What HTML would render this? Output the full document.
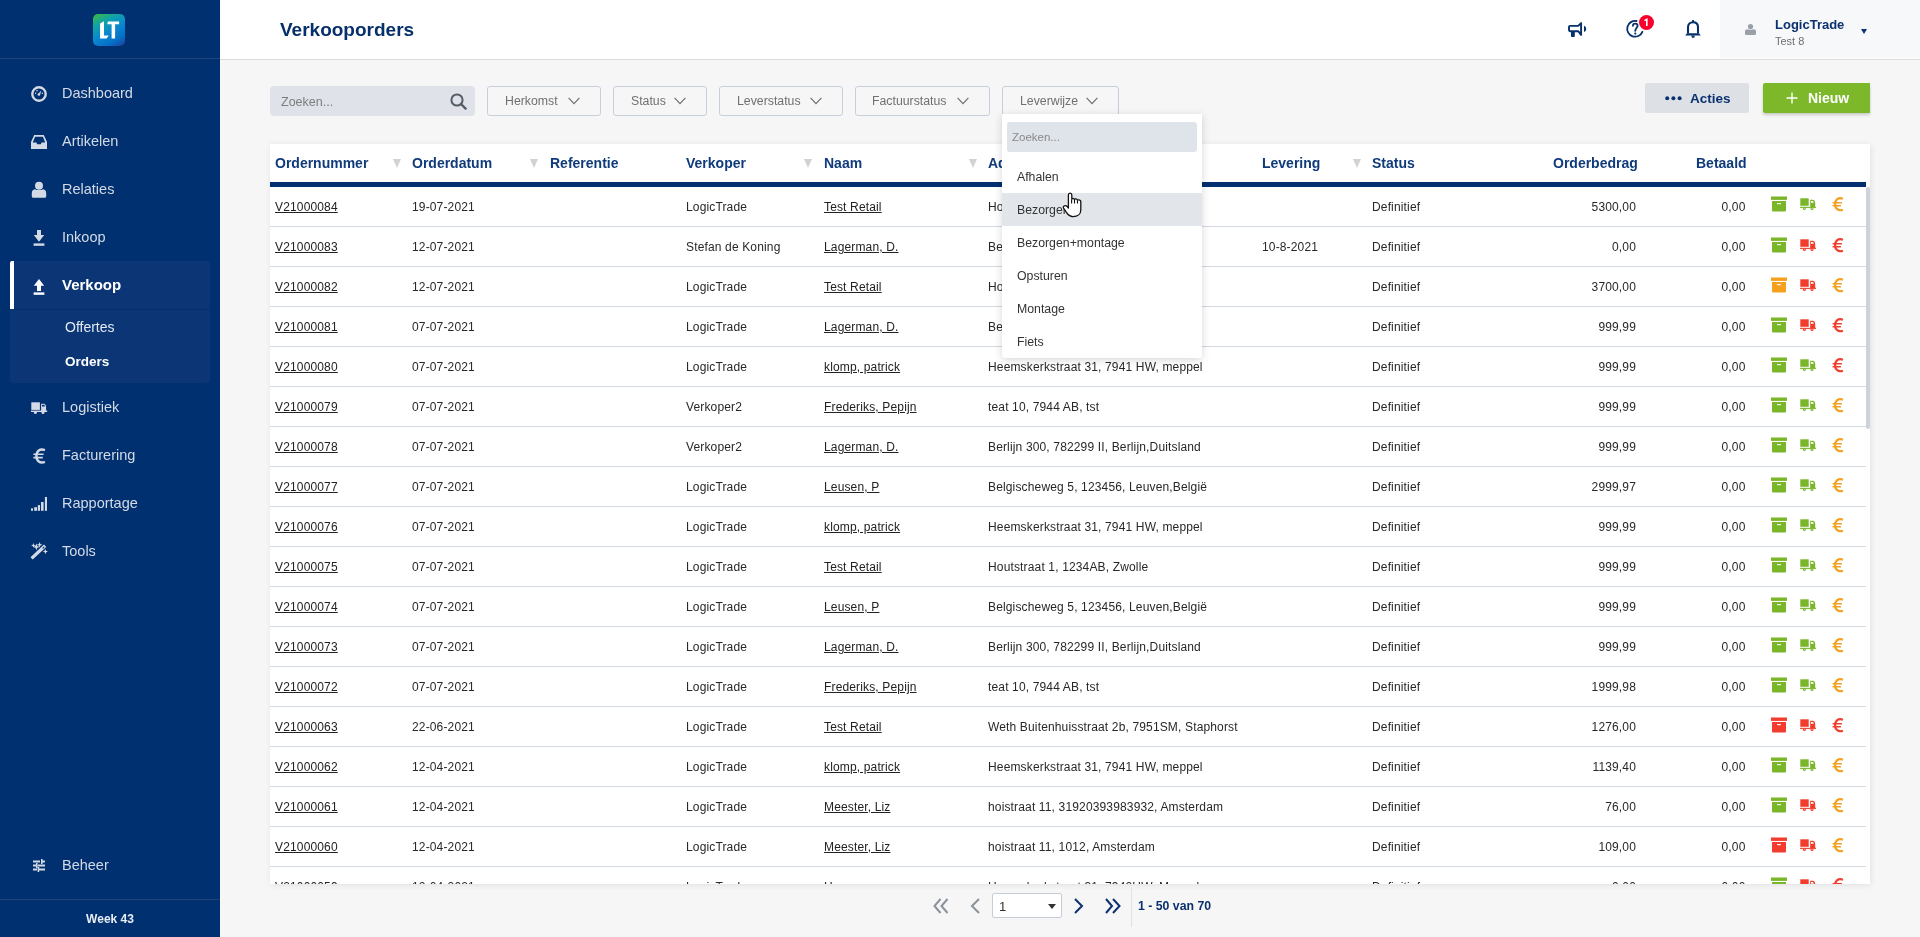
<!DOCTYPE html>
<html><head><meta charset="utf-8"><title>Verkooporders</title>
<style>
*{box-sizing:border-box;margin:0;padding:0}
html,body{width:1920px;height:937px;overflow:hidden;background:#f6f6f6;font-family:"Liberation Sans",sans-serif;-webkit-font-smoothing:antialiased;}
.abs{position:absolute}
#side{position:absolute;left:0;top:0;width:220px;height:937px;background:#00306f;}
#side .logo{position:absolute;left:93px;top:14px;width:32px;height:32px;border-radius:5px;background:linear-gradient(150deg,#40bb3a 0%,#10a3a8 28%,#0a86d0 55%,#0670c8 78%,#1b3d98 100%);}
#side .logo span{position:absolute;left:0;top:0;width:32px;line-height:32px;text-align:center;color:#fff;font-weight:700;font-size:20px;letter-spacing:-2px;}
#side .hdiv{position:absolute;left:0;top:58px;width:220px;height:1px;background:#1f447c}
.mi{position:absolute;left:62px;font-size:14.5px;color:#d3dae6;white-space:nowrap;line-height:1}
.mi.act{color:#fff;font-weight:700}
.sico{position:absolute;}
#actblk{position:absolute;left:10px;top:261px;width:200px;height:122px;background:#0b3574;border-radius:3px}
#actbar{position:absolute;left:10px;top:261px;width:4px;height:48px;background:#fff;border-radius:2px 0 0 0}
#actdiv{position:absolute;left:14px;top:309px;width:196px;height:1px;background:#062f6a}
.sub{position:absolute;left:65px;font-size:14px;color:#e4e9f1;line-height:1;white-space:nowrap}
.sub.b{font-weight:700;color:#fff;font-size:13.5px}
#week{position:absolute;left:0;top:899px;width:220px;height:38px;border-top:1px solid #1f447c}
#week span{position:absolute;left:0;width:220px;text-align:center;top:12px;font-size:12px;font-weight:700;color:#e8edf4}

#hdr{position:absolute;left:220px;top:0;width:1700px;height:60px;background:#fff;border-bottom:1px solid #dcdcdc}
#title{position:absolute;left:280px;top:20px;font-size:19px;font-weight:700;color:#06306b;line-height:1}
#user{position:absolute;left:1720px;top:0;width:200px;height:58px;background:#f7f8fa}
#uname{position:absolute;left:1775px;top:18px;font-size:13px;font-weight:700;color:#0b3170;line-height:1}
#usub{position:absolute;left:1775px;top:36px;font-size:11px;color:#707070;line-height:1}

#search{position:absolute;left:270px;top:86px;width:205px;height:30px;background:#dfe3e9;border-radius:4px}
#search span{position:absolute;left:11px;top:10px;font-size:12.5px;color:#7d7d7d;line-height:1}
.flt{position:absolute;top:86px;height:30px;border:1px solid #c6cedb;border-radius:3px;background:transparent}
.flt span{position:absolute;top:8px;font-size:12.3px;color:#707070;line-height:1;white-space:nowrap}
.flt svg{position:absolute;top:9.5px}
#acties{position:absolute;left:1645px;top:83px;width:104px;height:30px;background:#dde1e6;border-radius:2px}
#acties span{position:absolute;left:45px;top:8.5px;font-size:13.5px;font-weight:700;color:#0b3170;line-height:1}
#nieuw{position:absolute;left:1763px;top:83px;width:107px;height:30px;background:#7cb82a;border-radius:2px 0 0 2px;box-shadow:0 2px 3px rgba(0,0,0,.18)}
#nieuw span{position:absolute;left:45px;top:8px;font-size:14px;font-weight:700;color:#fff;line-height:1}

#tbl{position:absolute;left:270px;top:144px;width:1600px;height:740px;background:#fff;box-shadow:1px 1px 6px rgba(0,0,0,.09);overflow:hidden}
.th{position:absolute;top:12px;font-size:14px;font-weight:700;color:#0f3b7b;line-height:1;white-space:nowrap}
.th.r{text-align:right}
.srt{position:absolute;top:15px;width:0;height:0;border-left:4.4px solid transparent;border-right:4.4px solid transparent;border-top:9px solid #d2d2d2}
#bar{position:absolute;left:0;top:38px;width:1596px;height:5px;background:#00306f}
#body{position:absolute;left:0;top:43px;width:1596px;height:697px;overflow:hidden}
.tr{position:absolute;left:0;width:1596px;height:40px;border-bottom:1px solid #d3d9e2}
.td{position:absolute;top:14px;font-size:12px;color:#282828;line-height:1;white-space:nowrap;letter-spacing:0.15px}
.td.lnk{color:#222;text-decoration:underline;text-underline-offset:1px}
.ic{position:absolute;top:9px;height:18px}
.ib{position:absolute;top:0}
.it{position:absolute;top:2px}
.ie{position:absolute;top:0.5px}
#sbar{position:absolute;left:1596px;top:43px;width:4px;height:242px;background:#cdd3dc;border-radius:2px}

#dd{position:absolute;left:1002px;top:114px;width:200px;height:244px;background:#fff;border-radius:0 0 3px 3px;box-shadow:0 2px 8px rgba(0,0,0,.16)}
#ddsearch{position:absolute;left:5px;top:8px;width:190px;height:30px;background:#dfe3ea;border-radius:3px}
#ddsearch span{position:absolute;left:5px;top:10px;font-size:11.5px;color:#8a8a8a;line-height:1}
.ddi{position:absolute;left:0;width:200px;height:33px}
.ddi span{position:absolute;left:15px;top:11px;font-size:12.3px;color:#333;line-height:1}
.ddi.hov{background:#e2e6eb}

#pag .g{position:absolute}
#pgsel{position:absolute;left:992px;top:893px;width:70px;height:25px;background:#fff;border:1px solid #c5cdd8;border-radius:2px}
#pgsel span{position:absolute;left:6px;top:6px;font-size:13px;color:#333;line-height:1}
#pgtxt{position:absolute;left:1138px;top:900px;font-size:12.3px;font-weight:700;color:#0b3170;line-height:1}
#pgdiv{position:absolute;left:1131px;top:887px;width:1px;height:40px;background:#dde2e8}
#root{position:absolute;left:0;top:0;width:1920px;height:937px;will-change:transform}
</style></head><body><div id="root">

<div id="side">
  <div class="logo"><svg width="32" height="32" viewBox="0 0 32 32" style="position:absolute;left:0;top:0"><path d="M7.1 9.4L11 7.2V21.4H15.7L13.6 24.6H7.1Z" fill="#fff"/><path d="M15 7.5H26.1V10.3H22.1V24.6H18.6V10.3H14.2Z" fill="#fff"/></svg></div>
  <div class="hdiv"></div>
  <!-- Dashboard -->
  <svg class="sico" style="left:31px;top:86px" width="16" height="16" viewBox="0 0 16 16"><circle cx="8" cy="8" r="6.7" fill="none" stroke="#d3dae6" stroke-width="2.4"/><path d="M6.6 8.6L10.2 4.4L9 9.4Z" fill="#d3dae6"/><circle cx="7.8" cy="8.6" r="1.2" fill="#d3dae6"/><circle cx="4.6" cy="7.2" r="0.75" fill="#d3dae6"/><circle cx="6" cy="4.8" r="0.75" fill="#d3dae6"/><circle cx="11.4" cy="7.2" r="0.75" fill="#d3dae6"/></svg>
  <div class="mi" style="top:86px">Dashboard</div>
  <!-- Artikelen -->
  <svg class="sico" style="left:31px;top:135px" width="16" height="14" viewBox="0 0 16 14"><path d="M3.2 0h9.6L16 7v7H0V7z M4.1 1.8L1.8 7.4h3.6l0.8 1.8h3.6l0.8-1.8h3.6L11.9 1.8z" fill="#d3dae6" fill-rule="evenodd"/></svg>
  <div class="mi" style="top:134px">Artikelen</div>
  <!-- Relaties -->
  <svg class="sico" style="left:31px;top:181px" width="16" height="17" viewBox="0 0 16 17"><circle cx="8" cy="4.8" r="4" fill="#d3dae6"/><path d="M0.8 12.2C0.8 9.6 2.4 8.2 4.4 8.2C5.4 9.4 10.6 9.4 11.6 8.2C13.6 8.2 15.2 9.6 15.2 12.2V15.2C15.2 16 14.6 16.8 13.8 16.8H2.2C1.4 16.8 0.8 16 0.8 15.2z" fill="#d3dae6"/></svg>
  <div class="mi" style="top:182px">Relaties</div>
  <!-- Inkoop -->
  <svg class="sico" style="left:33px;top:230px" width="12" height="16" viewBox="0 0 12 16"><path d="M4 0h4v5h3.2L6 11.8L0.8 5H4z" fill="#d3dae6"/><rect x="0.6" y="13.4" width="10.8" height="2.4" fill="#d3dae6"/></svg>
  <div class="mi" style="top:230px">Inkoop</div>

  <div id="actblk"></div><div id="actbar"></div><div id="actdiv"></div>
  <!-- Verkoop -->
  <svg class="sico" style="left:33px;top:279px" width="12" height="16" viewBox="0 0 12 16"><path d="M6 0L11.2 6.8H8V12H4V6.8H0.8z" fill="#fff"/><rect x="0.6" y="13.4" width="10.8" height="2.4" fill="#fff"/></svg>
  <div class="mi act" style="top:277px;font-size:15px">Verkoop</div>
  <div class="sub" style="top:320px">Offertes</div>
  <div class="sub b" style="top:355px">Orders</div>

  <!-- Logistiek -->
  <svg class="sico" style="left:31px;top:402px" width="17" height="12" viewBox="0 0 17 12"><rect x="0.3" y="0.3" width="8.6" height="7.6" fill="#d3dae6"/><path d="M10.1 1.8h2.9c1.2 0 2 1.3 2.1 3.3V9H10.1z" fill="#d3dae6"/><path d="M11.1 2.8h1.8c.5 0 .9.6 1 1.6h-2.8z" fill="#00306f"/><rect x="0" y="8.6" width="16.2" height="1.4" fill="#d3dae6"/><circle cx="4.4" cy="10.4" r="1.5" fill="#d3dae6"/><circle cx="12" cy="10.4" r="1.5" fill="#d3dae6"/></svg>
  <div class="mi" style="top:400px">Logistiek</div>
  <!-- Facturering -->
  <svg class="sico" style="left:33px;top:448px" width="13" height="16" viewBox="0 0 13 16"><path d="M11.9 2.1C6.9 0 3.4 3.2 3.4 8C3.4 12.8 6.9 16 11.9 13.9" fill="none" stroke="#d3dae6" stroke-width="2.4"/><path d="M0.4 6.3H10.6M0.4 9.6H9.8" stroke="#d3dae6" stroke-width="1.6"/></svg>
  <div class="mi" style="top:448px">Facturering</div>
  <!-- Rapportage -->
  <svg class="sico" style="left:31px;top:497px" width="16" height="14" viewBox="0 0 16 14"><rect x="0" y="11.3" width="2" height="2.5" fill="#d3dae6"/><rect x="3.2" y="10.2" width="2.8" height="3.6" fill="#d3dae6"/><rect x="6.8" y="8.1" width="2.2" height="5.7" fill="#d3dae6"/><rect x="10" y="5" width="2.6" height="8.8" fill="#d3dae6"/><rect x="13.9" y="0" width="2.1" height="13.8" fill="#d3dae6"/></svg>
  <div class="mi" style="top:496px">Rapportage</div>
  <!-- Tools -->
  <svg class="sico" style="left:30px;top:542px" width="19" height="18" viewBox="0 0 19 18"><path d="M1.6 16.4L15.1 3.7" stroke="#d3dae6" stroke-width="3.3"/><path d="M12.6 6.4L14.3 4.8" stroke="#00306f" stroke-width="1.1"/><path d="M6.4 1.50L7.35 3.95L9.80 4.9L7.35 5.85L6.4 8.30L5.45 5.85L3.00 4.9L5.45 3.95ZM3.4 1.10L4.04 2.76L5.70 3.4L4.04 4.04L3.4 5.70L2.76 4.04L1.10 3.4L2.76 2.76ZM9.6 0.00L10.36 1.94L12.30 2.7L10.36 3.46L9.6 5.40L8.84 3.46L6.90 2.7L8.84 1.94ZM15.4 7.00L16.13 8.87L18.00 9.6L16.13 10.33L15.4 12.20L14.67 10.33L12.80 9.6L14.67 8.87Z" fill="#d3dae6"/></svg>
  <div class="mi" style="top:543.5px">Tools</div>
  <!-- Beheer -->
  <svg class="sico" style="left:33px;top:859px" width="12" height="13" viewBox="0 0 12 13"><rect x="0" y="1.5" width="7" height="2" fill="#d3dae6"/><rect x="8.6" y="1.5" width="3.4" height="2" fill="#d3dae6"/><rect x="8" y="0" width="1.6" height="5" fill="#d3dae6"/><rect x="0" y="5.5" width="3.4" height="2" fill="#d3dae6"/><rect x="5" y="5.5" width="7" height="2" fill="#d3dae6"/><rect x="3" y="4" width="1.6" height="5" fill="#d3dae6"/><rect x="0" y="9.5" width="4" height="2" fill="#d3dae6"/><rect x="5.6" y="9.5" width="6.4" height="2" fill="#d3dae6"/><rect x="4.6" y="8" width="1.6" height="5" fill="#d3dae6"/></svg>
  <div class="mi" style="top:858px">Beheer</div>
  <div id="week"><span>Week 43</span></div>
</div>

<div id="hdr"></div>
<div id="title">Verkooporders</div>
<!-- megaphone -->
<svg class="abs" style="left:1564px;top:18px" width="26" height="22" viewBox="0 0 26 22"><path d="M6.1 7.9H14.2L17.1 5.1V16.9L14.2 13.2H6.1C5.5 13.2 5 12.7 5 12.1V9C5 8.4 5.5 7.9 6.1 7.9Z" fill="none" stroke="#06306b" stroke-width="1.9" stroke-linejoin="round"/><path d="M7 13.4H10.8V18.2C10.8 18.7 10.4 19 9.9 19H7.9C7.4 19 7 18.7 7 18.2Z" fill="#06306b"/><path d="M20 7.8C21.4 8.4 22.2 9.6 22.2 10.95C22.2 12.3 21.4 13.5 20 14.1Z" fill="#06306b"/></svg>
<!-- help -->
<svg class="abs" style="left:1622px;top:12px" width="36" height="30" viewBox="0 0 36 30"><path d="M20.4 19.8A7.9 7.9 0 1 1 14.5 9" fill="none" stroke="#06306b" stroke-width="1.8" stroke-linecap="round"/><path d="M10.9 13.8C10.9 12.3 12 11.6 13.3 11.6C14.6 11.6 15.6 12.4 15.6 13.7C15.6 15.4 13.6 16 13.2 18.8" fill="none" stroke="#06306b" stroke-width="1.8" stroke-linecap="round"/><circle cx="13.3" cy="21.6" r="1.1" fill="#06306b"/></svg>
<div class="abs" style="left:1639px;top:15px;width:15px;height:15px;border-radius:50%;background:#f7002e"></div>
<svg class="abs" style="left:1639px;top:15px" width="15" height="15" viewBox="0 0 15 15"><path d="M5.5 5.6L7.8 4.3V11.1" fill="none" stroke="#fff" stroke-width="1.6"/></svg>
<!-- bell -->
<svg class="abs" style="left:1680px;top:16px" width="26" height="26" viewBox="0 0 26 26"><path d="M8 17.6V11.2C8 8 10.2 6.3 13 6.3C15.8 6.3 18 8 18 11.2V17.6" fill="none" stroke="#06306b" stroke-width="2.1"/><path d="M5.2 19.4L7 17.3H19L20.8 19.4Z" fill="#06306b"/><rect x="12" y="4.1" width="2" height="2.4" fill="#06306b"/><path d="M11.4 19.6H14.8L14.5 21.3C14.2 22 11.9 22 11.7 21.3Z" fill="#06306b"/></svg>
<div id="user"></div>
<svg class="abs" style="left:1745px;top:24px" width="11" height="11" viewBox="0 0 11 11"><circle cx="5.5" cy="2.6" r="2.6" fill="#9aa0a8"/><path d="M0 7.6C0 6 1 5.2 2.4 5.2c.8.6 5.4.6 6.2 0C10 5.2 11 6 11 7.6V9.8c0 .6-.5 1.2-1.1 1.2H1.1C.5 11 0 10.4 0 9.8z" fill="#9aa0a8"/></svg>
<div id="uname">LogicTrade</div>
<div id="usub">Test 8</div>
<div class="abs" style="left:1861px;top:29px;width:0;height:0;border-left:3.5px solid transparent;border-right:3.5px solid transparent;border-top:5px solid #0b3170"></div>

<div id="search"><span>Zoeken...</span>
<svg class="abs" style="left:180px;top:7px" width="17" height="17" viewBox="0 0 17 17"><circle cx="7" cy="7" r="5.6" fill="none" stroke="#555c66" stroke-width="2"/><path d="M11 11l4.6 4.6" stroke="#555c66" stroke-width="2.4" stroke-linecap="round"/></svg></div>

<div class="flt" style="left:487px;width:114px"><span style="left:17px">Herkomst</span><svg style="left:80px" width="12" height="8" viewBox="0 0 12 8"><path d="M0.6 0.8L6 6.6L11.4 0.8" fill="none" stroke="#6f6f6f" stroke-width="1.2"/></svg></div>
<div class="flt" style="left:613px;width:94px"><span style="left:17px">Status</span><svg style="left:60px" width="12" height="8" viewBox="0 0 12 8"><path d="M0.6 0.8L6 6.6L11.4 0.8" fill="none" stroke="#6f6f6f" stroke-width="1.2"/></svg></div>
<div class="flt" style="left:719px;width:124px"><span style="left:17px">Leverstatus</span><svg style="left:90px" width="12" height="8" viewBox="0 0 12 8"><path d="M0.6 0.8L6 6.6L11.4 0.8" fill="none" stroke="#6f6f6f" stroke-width="1.2"/></svg></div>
<div class="flt" style="left:855px;width:135px"><span style="left:16px">Factuurstatus</span><svg style="left:101px" width="12" height="8" viewBox="0 0 12 8"><path d="M0.6 0.8L6 6.6L11.4 0.8" fill="none" stroke="#6f6f6f" stroke-width="1.2"/></svg></div>
<div class="flt" style="left:1002px;width:117px"><span style="left:17px">Leverwijze</span><svg style="left:83px" width="12" height="8" viewBox="0 0 12 8"><path d="M0.6 0.8L6 6.6L11.4 0.8" fill="none" stroke="#6f6f6f" stroke-width="1.2"/></svg></div>

<div id="acties"><svg class="abs" style="left:20px;top:13px" width="17" height="5" viewBox="0 0 17 5"><circle cx="2.2" cy="2.2" r="2" fill="#0b3170"/><circle cx="8.4" cy="2.2" r="2" fill="#0b3170"/><circle cx="14.6" cy="2.2" r="2" fill="#0b3170"/></svg><span>Acties</span></div>
<div id="nieuw"><svg class="abs" style="left:23px;top:9px" width="12" height="12" viewBox="0 0 12 12"><path d="M6 0.5V11.5M0.5 6H11.5" stroke="#fff" stroke-width="1.4"/></svg><span>Nieuw</span></div>

<div id="tbl">
  <div class="th" style="left:5px">Ordernummer</div><span class="srt" style="left:123px"></span>
  <div class="th" style="left:142px">Orderdatum</div><span class="srt" style="left:260px"></span>
  <div class="th" style="left:280px">Referentie</div>
  <div class="th" style="left:416px">Verkoper</div><span class="srt" style="left:534px"></span>
  <div class="th" style="left:554px">Naam</div><span class="srt" style="left:699px"></span>
  <div class="th" style="left:718px">Adres</div>
  <div class="th" style="left:992px">Levering</div><span class="srt" style="left:1083px"></span>
  <div class="th" style="left:1102px">Status</div>
  <div class="th" style="left:1283px">Orderbedrag</div>
  <div class="th" style="left:1426px">Betaald</div>
  <div id="bar"></div>
  <div id="body">
<div class="tr" style="top:0px"><span class="td lnk" style="left:5px">V21000084</span><span class="td" style="left:142px">19-07-2021</span><span class="td" style="left:416px">LogicTrade</span><span class="td lnk" style="left:554px">Test Retail</span><span class="td" style="left:718px">Houtstraat 1, 1234AB, Zwolle</span><span class="td" style="left:992px"></span><span class="td" style="left:1102px">Definitief</span><span class="td r" style="right:230px">5300,00</span><span class="td r" style="right:120.5px">0,00</span><span class="ic" style="left:1501px;top:9px"><svg class="ib" width="16" height="16" viewBox="0 0 16 16"><rect x="0" y="0.5" width="16" height="3.4" fill="#7ab629"/><path d="M1 5h14v9.6a0.8 0.8 0 0 1-0.8 0.8H1.8A0.8 0.8 0 0 1 1 14.6z" fill="#7ab629"/><rect x="6" y="7" width="4" height="1.2" rx="0.6" fill="#fff"/></svg></span><span class="ic" style="left:1530px;top:9px"><svg class="it" width="16" height="13" viewBox="0 0 16 13"><rect x="0.3" y="0.3" width="8.4" height="7.5" fill="#7ab629"/><path d="M10.2 1.8h2.6c1.3 0 2.3 1.2 2.4 3.2V9H10.2z" fill="#7ab629"/><path d="M11 2.9h1.7c.6 0 1 .8 1.1 1.9h-2.8z" fill="#fff"/><rect x="0" y="8.8" width="16" height="1.1" fill="#7ab629"/><circle cx="4.4" cy="10.5" r="1.5" fill="#7ab629"/><circle cx="12" cy="10.5" r="1.5" fill="#7ab629"/><circle cx="4.4" cy="10.5" r=".5" fill="#fff"/><circle cx="12" cy="10.5" r=".5" fill="#fff"/></svg></span><span class="ic" style="left:1562px;top:9px"><svg class="ie" width="12" height="15" viewBox="0 0 12 15"><path d="M10.9 1.7C6.2 -0.1 3.1 3 3.1 7.2C3.1 11.4 6.2 14.5 10.9 12.7" fill="none" stroke="#f5a01e" stroke-width="2.2"/><path d="M0.6 5.7H9.9M0.6 8.7H8.9" stroke="#f5a01e" stroke-width="1.5"/></svg></span></div>
<div class="tr" style="top:40px"><span class="td lnk" style="left:5px">V21000083</span><span class="td" style="left:142px">12-07-2021</span><span class="td" style="left:416px">Stefan de Koning</span><span class="td lnk" style="left:554px">Lagerman, D.</span><span class="td" style="left:718px">Berlijn 300, 782299 II, Berlijn,Duitsland</span><span class="td" style="left:992px">10-8-2021</span><span class="td" style="left:1102px">Definitief</span><span class="td r" style="right:230px">0,00</span><span class="td r" style="right:120.5px">0,00</span><span class="ic" style="left:1501px;top:10px"><svg class="ib" width="16" height="16" viewBox="0 0 16 16"><rect x="0" y="0.5" width="16" height="3.4" fill="#7ab629"/><path d="M1 5h14v9.6a0.8 0.8 0 0 1-0.8 0.8H1.8A0.8 0.8 0 0 1 1 14.6z" fill="#7ab629"/><rect x="6" y="7" width="4" height="1.2" rx="0.6" fill="#fff"/></svg></span><span class="ic" style="left:1530px;top:10px"><svg class="it" width="16" height="13" viewBox="0 0 16 13"><rect x="0.3" y="0.3" width="8.4" height="7.5" fill="#f23c2d"/><path d="M10.2 1.8h2.6c1.3 0 2.3 1.2 2.4 3.2V9H10.2z" fill="#f23c2d"/><path d="M11 2.9h1.7c.6 0 1 .8 1.1 1.9h-2.8z" fill="#fff"/><rect x="0" y="8.8" width="16" height="1.1" fill="#f23c2d"/><circle cx="4.4" cy="10.5" r="1.5" fill="#f23c2d"/><circle cx="12" cy="10.5" r="1.5" fill="#f23c2d"/><circle cx="4.4" cy="10.5" r=".5" fill="#fff"/><circle cx="12" cy="10.5" r=".5" fill="#fff"/></svg></span><span class="ic" style="left:1562px;top:10px"><svg class="ie" width="12" height="15" viewBox="0 0 12 15"><path d="M10.9 1.7C6.2 -0.1 3.1 3 3.1 7.2C3.1 11.4 6.2 14.5 10.9 12.7" fill="none" stroke="#f23c2d" stroke-width="2.2"/><path d="M0.6 5.7H9.9M0.6 8.7H8.9" stroke="#f23c2d" stroke-width="1.5"/></svg></span></div>
<div class="tr" style="top:80px"><span class="td lnk" style="left:5px">V21000082</span><span class="td" style="left:142px">12-07-2021</span><span class="td" style="left:416px">LogicTrade</span><span class="td lnk" style="left:554px">Test Retail</span><span class="td" style="left:718px">Houtstraat 1, 1234AB, Zwolle</span><span class="td" style="left:992px"></span><span class="td" style="left:1102px">Definitief</span><span class="td r" style="right:230px">3700,00</span><span class="td r" style="right:120.5px">0,00</span><span class="ic" style="left:1501px;top:10px"><svg class="ib" width="16" height="16" viewBox="0 0 16 16"><rect x="0" y="0.5" width="16" height="3.4" fill="#f5a01e"/><path d="M1 5h14v9.6a0.8 0.8 0 0 1-0.8 0.8H1.8A0.8 0.8 0 0 1 1 14.6z" fill="#f5a01e"/><rect x="6" y="7" width="4" height="1.2" rx="0.6" fill="#fff"/></svg></span><span class="ic" style="left:1530px;top:10px"><svg class="it" width="16" height="13" viewBox="0 0 16 13"><rect x="0.3" y="0.3" width="8.4" height="7.5" fill="#f23c2d"/><path d="M10.2 1.8h2.6c1.3 0 2.3 1.2 2.4 3.2V9H10.2z" fill="#f23c2d"/><path d="M11 2.9h1.7c.6 0 1 .8 1.1 1.9h-2.8z" fill="#fff"/><rect x="0" y="8.8" width="16" height="1.1" fill="#f23c2d"/><circle cx="4.4" cy="10.5" r="1.5" fill="#f23c2d"/><circle cx="12" cy="10.5" r="1.5" fill="#f23c2d"/><circle cx="4.4" cy="10.5" r=".5" fill="#fff"/><circle cx="12" cy="10.5" r=".5" fill="#fff"/></svg></span><span class="ic" style="left:1562px;top:10px"><svg class="ie" width="12" height="15" viewBox="0 0 12 15"><path d="M10.9 1.7C6.2 -0.1 3.1 3 3.1 7.2C3.1 11.4 6.2 14.5 10.9 12.7" fill="none" stroke="#f5a01e" stroke-width="2.2"/><path d="M0.6 5.7H9.9M0.6 8.7H8.9" stroke="#f5a01e" stroke-width="1.5"/></svg></span></div>
<div class="tr" style="top:120px"><span class="td lnk" style="left:5px">V21000081</span><span class="td" style="left:142px">07-07-2021</span><span class="td" style="left:416px">LogicTrade</span><span class="td lnk" style="left:554px">Lagerman, D.</span><span class="td" style="left:718px">Berlijn 300, 782299 II, Berlijn,Duitsland</span><span class="td" style="left:992px"></span><span class="td" style="left:1102px">Definitief</span><span class="td r" style="right:230px">999,99</span><span class="td r" style="right:120.5px">0,00</span><span class="ic" style="left:1501px;top:10px"><svg class="ib" width="16" height="16" viewBox="0 0 16 16"><rect x="0" y="0.5" width="16" height="3.4" fill="#7ab629"/><path d="M1 5h14v9.6a0.8 0.8 0 0 1-0.8 0.8H1.8A0.8 0.8 0 0 1 1 14.6z" fill="#7ab629"/><rect x="6" y="7" width="4" height="1.2" rx="0.6" fill="#fff"/></svg></span><span class="ic" style="left:1530px;top:10px"><svg class="it" width="16" height="13" viewBox="0 0 16 13"><rect x="0.3" y="0.3" width="8.4" height="7.5" fill="#f23c2d"/><path d="M10.2 1.8h2.6c1.3 0 2.3 1.2 2.4 3.2V9H10.2z" fill="#f23c2d"/><path d="M11 2.9h1.7c.6 0 1 .8 1.1 1.9h-2.8z" fill="#fff"/><rect x="0" y="8.8" width="16" height="1.1" fill="#f23c2d"/><circle cx="4.4" cy="10.5" r="1.5" fill="#f23c2d"/><circle cx="12" cy="10.5" r="1.5" fill="#f23c2d"/><circle cx="4.4" cy="10.5" r=".5" fill="#fff"/><circle cx="12" cy="10.5" r=".5" fill="#fff"/></svg></span><span class="ic" style="left:1562px;top:10px"><svg class="ie" width="12" height="15" viewBox="0 0 12 15"><path d="M10.9 1.7C6.2 -0.1 3.1 3 3.1 7.2C3.1 11.4 6.2 14.5 10.9 12.7" fill="none" stroke="#f23c2d" stroke-width="2.2"/><path d="M0.6 5.7H9.9M0.6 8.7H8.9" stroke="#f23c2d" stroke-width="1.5"/></svg></span></div>
<div class="tr" style="top:160px"><span class="td lnk" style="left:5px">V21000080</span><span class="td" style="left:142px">07-07-2021</span><span class="td" style="left:416px">LogicTrade</span><span class="td lnk" style="left:554px">klomp, patrick</span><span class="td" style="left:718px">Heemskerkstraat 31, 7941 HW, meppel</span><span class="td" style="left:992px"></span><span class="td" style="left:1102px">Definitief</span><span class="td r" style="right:230px">999,99</span><span class="td r" style="right:120.5px">0,00</span><span class="ic" style="left:1501px;top:10px"><svg class="ib" width="16" height="16" viewBox="0 0 16 16"><rect x="0" y="0.5" width="16" height="3.4" fill="#7ab629"/><path d="M1 5h14v9.6a0.8 0.8 0 0 1-0.8 0.8H1.8A0.8 0.8 0 0 1 1 14.6z" fill="#7ab629"/><rect x="6" y="7" width="4" height="1.2" rx="0.6" fill="#fff"/></svg></span><span class="ic" style="left:1530px;top:10px"><svg class="it" width="16" height="13" viewBox="0 0 16 13"><rect x="0.3" y="0.3" width="8.4" height="7.5" fill="#7ab629"/><path d="M10.2 1.8h2.6c1.3 0 2.3 1.2 2.4 3.2V9H10.2z" fill="#7ab629"/><path d="M11 2.9h1.7c.6 0 1 .8 1.1 1.9h-2.8z" fill="#fff"/><rect x="0" y="8.8" width="16" height="1.1" fill="#7ab629"/><circle cx="4.4" cy="10.5" r="1.5" fill="#7ab629"/><circle cx="12" cy="10.5" r="1.5" fill="#7ab629"/><circle cx="4.4" cy="10.5" r=".5" fill="#fff"/><circle cx="12" cy="10.5" r=".5" fill="#fff"/></svg></span><span class="ic" style="left:1562px;top:10px"><svg class="ie" width="12" height="15" viewBox="0 0 12 15"><path d="M10.9 1.7C6.2 -0.1 3.1 3 3.1 7.2C3.1 11.4 6.2 14.5 10.9 12.7" fill="none" stroke="#f23c2d" stroke-width="2.2"/><path d="M0.6 5.7H9.9M0.6 8.7H8.9" stroke="#f23c2d" stroke-width="1.5"/></svg></span></div>
<div class="tr" style="top:200px"><span class="td lnk" style="left:5px">V21000079</span><span class="td" style="left:142px">07-07-2021</span><span class="td" style="left:416px">Verkoper2</span><span class="td lnk" style="left:554px">Frederiks, Pepijn</span><span class="td" style="left:718px">teat 10, 7944 AB, tst</span><span class="td" style="left:992px"></span><span class="td" style="left:1102px">Definitief</span><span class="td r" style="right:230px">999,99</span><span class="td r" style="right:120.5px">0,00</span><span class="ic" style="left:1501px;top:10px"><svg class="ib" width="16" height="16" viewBox="0 0 16 16"><rect x="0" y="0.5" width="16" height="3.4" fill="#7ab629"/><path d="M1 5h14v9.6a0.8 0.8 0 0 1-0.8 0.8H1.8A0.8 0.8 0 0 1 1 14.6z" fill="#7ab629"/><rect x="6" y="7" width="4" height="1.2" rx="0.6" fill="#fff"/></svg></span><span class="ic" style="left:1530px;top:10px"><svg class="it" width="16" height="13" viewBox="0 0 16 13"><rect x="0.3" y="0.3" width="8.4" height="7.5" fill="#7ab629"/><path d="M10.2 1.8h2.6c1.3 0 2.3 1.2 2.4 3.2V9H10.2z" fill="#7ab629"/><path d="M11 2.9h1.7c.6 0 1 .8 1.1 1.9h-2.8z" fill="#fff"/><rect x="0" y="8.8" width="16" height="1.1" fill="#7ab629"/><circle cx="4.4" cy="10.5" r="1.5" fill="#7ab629"/><circle cx="12" cy="10.5" r="1.5" fill="#7ab629"/><circle cx="4.4" cy="10.5" r=".5" fill="#fff"/><circle cx="12" cy="10.5" r=".5" fill="#fff"/></svg></span><span class="ic" style="left:1562px;top:10px"><svg class="ie" width="12" height="15" viewBox="0 0 12 15"><path d="M10.9 1.7C6.2 -0.1 3.1 3 3.1 7.2C3.1 11.4 6.2 14.5 10.9 12.7" fill="none" stroke="#f5a01e" stroke-width="2.2"/><path d="M0.6 5.7H9.9M0.6 8.7H8.9" stroke="#f5a01e" stroke-width="1.5"/></svg></span></div>
<div class="tr" style="top:240px"><span class="td lnk" style="left:5px">V21000078</span><span class="td" style="left:142px">07-07-2021</span><span class="td" style="left:416px">Verkoper2</span><span class="td lnk" style="left:554px">Lagerman, D.</span><span class="td" style="left:718px">Berlijn 300, 782299 II, Berlijn,Duitsland</span><span class="td" style="left:992px"></span><span class="td" style="left:1102px">Definitief</span><span class="td r" style="right:230px">999,99</span><span class="td r" style="right:120.5px">0,00</span><span class="ic" style="left:1501px;top:10px"><svg class="ib" width="16" height="16" viewBox="0 0 16 16"><rect x="0" y="0.5" width="16" height="3.4" fill="#7ab629"/><path d="M1 5h14v9.6a0.8 0.8 0 0 1-0.8 0.8H1.8A0.8 0.8 0 0 1 1 14.6z" fill="#7ab629"/><rect x="6" y="7" width="4" height="1.2" rx="0.6" fill="#fff"/></svg></span><span class="ic" style="left:1530px;top:10px"><svg class="it" width="16" height="13" viewBox="0 0 16 13"><rect x="0.3" y="0.3" width="8.4" height="7.5" fill="#7ab629"/><path d="M10.2 1.8h2.6c1.3 0 2.3 1.2 2.4 3.2V9H10.2z" fill="#7ab629"/><path d="M11 2.9h1.7c.6 0 1 .8 1.1 1.9h-2.8z" fill="#fff"/><rect x="0" y="8.8" width="16" height="1.1" fill="#7ab629"/><circle cx="4.4" cy="10.5" r="1.5" fill="#7ab629"/><circle cx="12" cy="10.5" r="1.5" fill="#7ab629"/><circle cx="4.4" cy="10.5" r=".5" fill="#fff"/><circle cx="12" cy="10.5" r=".5" fill="#fff"/></svg></span><span class="ic" style="left:1562px;top:10px"><svg class="ie" width="12" height="15" viewBox="0 0 12 15"><path d="M10.9 1.7C6.2 -0.1 3.1 3 3.1 7.2C3.1 11.4 6.2 14.5 10.9 12.7" fill="none" stroke="#f5a01e" stroke-width="2.2"/><path d="M0.6 5.7H9.9M0.6 8.7H8.9" stroke="#f5a01e" stroke-width="1.5"/></svg></span></div>
<div class="tr" style="top:280px"><span class="td lnk" style="left:5px">V21000077</span><span class="td" style="left:142px">07-07-2021</span><span class="td" style="left:416px">LogicTrade</span><span class="td lnk" style="left:554px">Leusen, P</span><span class="td" style="left:718px">Belgischeweg 5, 123456, Leuven,Belgi&euml;</span><span class="td" style="left:992px"></span><span class="td" style="left:1102px">Definitief</span><span class="td r" style="right:230px">2999,97</span><span class="td r" style="right:120.5px">0,00</span><span class="ic" style="left:1501px;top:10px"><svg class="ib" width="16" height="16" viewBox="0 0 16 16"><rect x="0" y="0.5" width="16" height="3.4" fill="#7ab629"/><path d="M1 5h14v9.6a0.8 0.8 0 0 1-0.8 0.8H1.8A0.8 0.8 0 0 1 1 14.6z" fill="#7ab629"/><rect x="6" y="7" width="4" height="1.2" rx="0.6" fill="#fff"/></svg></span><span class="ic" style="left:1530px;top:10px"><svg class="it" width="16" height="13" viewBox="0 0 16 13"><rect x="0.3" y="0.3" width="8.4" height="7.5" fill="#7ab629"/><path d="M10.2 1.8h2.6c1.3 0 2.3 1.2 2.4 3.2V9H10.2z" fill="#7ab629"/><path d="M11 2.9h1.7c.6 0 1 .8 1.1 1.9h-2.8z" fill="#fff"/><rect x="0" y="8.8" width="16" height="1.1" fill="#7ab629"/><circle cx="4.4" cy="10.5" r="1.5" fill="#7ab629"/><circle cx="12" cy="10.5" r="1.5" fill="#7ab629"/><circle cx="4.4" cy="10.5" r=".5" fill="#fff"/><circle cx="12" cy="10.5" r=".5" fill="#fff"/></svg></span><span class="ic" style="left:1562px;top:10px"><svg class="ie" width="12" height="15" viewBox="0 0 12 15"><path d="M10.9 1.7C6.2 -0.1 3.1 3 3.1 7.2C3.1 11.4 6.2 14.5 10.9 12.7" fill="none" stroke="#f5a01e" stroke-width="2.2"/><path d="M0.6 5.7H9.9M0.6 8.7H8.9" stroke="#f5a01e" stroke-width="1.5"/></svg></span></div>
<div class="tr" style="top:320px"><span class="td lnk" style="left:5px">V21000076</span><span class="td" style="left:142px">07-07-2021</span><span class="td" style="left:416px">LogicTrade</span><span class="td lnk" style="left:554px">klomp, patrick</span><span class="td" style="left:718px">Heemskerkstraat 31, 7941 HW, meppel</span><span class="td" style="left:992px"></span><span class="td" style="left:1102px">Definitief</span><span class="td r" style="right:230px">999,99</span><span class="td r" style="right:120.5px">0,00</span><span class="ic" style="left:1501px;top:10px"><svg class="ib" width="16" height="16" viewBox="0 0 16 16"><rect x="0" y="0.5" width="16" height="3.4" fill="#7ab629"/><path d="M1 5h14v9.6a0.8 0.8 0 0 1-0.8 0.8H1.8A0.8 0.8 0 0 1 1 14.6z" fill="#7ab629"/><rect x="6" y="7" width="4" height="1.2" rx="0.6" fill="#fff"/></svg></span><span class="ic" style="left:1530px;top:10px"><svg class="it" width="16" height="13" viewBox="0 0 16 13"><rect x="0.3" y="0.3" width="8.4" height="7.5" fill="#7ab629"/><path d="M10.2 1.8h2.6c1.3 0 2.3 1.2 2.4 3.2V9H10.2z" fill="#7ab629"/><path d="M11 2.9h1.7c.6 0 1 .8 1.1 1.9h-2.8z" fill="#fff"/><rect x="0" y="8.8" width="16" height="1.1" fill="#7ab629"/><circle cx="4.4" cy="10.5" r="1.5" fill="#7ab629"/><circle cx="12" cy="10.5" r="1.5" fill="#7ab629"/><circle cx="4.4" cy="10.5" r=".5" fill="#fff"/><circle cx="12" cy="10.5" r=".5" fill="#fff"/></svg></span><span class="ic" style="left:1562px;top:10px"><svg class="ie" width="12" height="15" viewBox="0 0 12 15"><path d="M10.9 1.7C6.2 -0.1 3.1 3 3.1 7.2C3.1 11.4 6.2 14.5 10.9 12.7" fill="none" stroke="#f5a01e" stroke-width="2.2"/><path d="M0.6 5.7H9.9M0.6 8.7H8.9" stroke="#f5a01e" stroke-width="1.5"/></svg></span></div>
<div class="tr" style="top:360px"><span class="td lnk" style="left:5px">V21000075</span><span class="td" style="left:142px">07-07-2021</span><span class="td" style="left:416px">LogicTrade</span><span class="td lnk" style="left:554px">Test Retail</span><span class="td" style="left:718px">Houtstraat 1, 1234AB, Zwolle</span><span class="td" style="left:992px"></span><span class="td" style="left:1102px">Definitief</span><span class="td r" style="right:230px">999,99</span><span class="td r" style="right:120.5px">0,00</span><span class="ic" style="left:1501px;top:10px"><svg class="ib" width="16" height="16" viewBox="0 0 16 16"><rect x="0" y="0.5" width="16" height="3.4" fill="#7ab629"/><path d="M1 5h14v9.6a0.8 0.8 0 0 1-0.8 0.8H1.8A0.8 0.8 0 0 1 1 14.6z" fill="#7ab629"/><rect x="6" y="7" width="4" height="1.2" rx="0.6" fill="#fff"/></svg></span><span class="ic" style="left:1530px;top:10px"><svg class="it" width="16" height="13" viewBox="0 0 16 13"><rect x="0.3" y="0.3" width="8.4" height="7.5" fill="#7ab629"/><path d="M10.2 1.8h2.6c1.3 0 2.3 1.2 2.4 3.2V9H10.2z" fill="#7ab629"/><path d="M11 2.9h1.7c.6 0 1 .8 1.1 1.9h-2.8z" fill="#fff"/><rect x="0" y="8.8" width="16" height="1.1" fill="#7ab629"/><circle cx="4.4" cy="10.5" r="1.5" fill="#7ab629"/><circle cx="12" cy="10.5" r="1.5" fill="#7ab629"/><circle cx="4.4" cy="10.5" r=".5" fill="#fff"/><circle cx="12" cy="10.5" r=".5" fill="#fff"/></svg></span><span class="ic" style="left:1562px;top:10px"><svg class="ie" width="12" height="15" viewBox="0 0 12 15"><path d="M10.9 1.7C6.2 -0.1 3.1 3 3.1 7.2C3.1 11.4 6.2 14.5 10.9 12.7" fill="none" stroke="#f5a01e" stroke-width="2.2"/><path d="M0.6 5.7H9.9M0.6 8.7H8.9" stroke="#f5a01e" stroke-width="1.5"/></svg></span></div>
<div class="tr" style="top:400px"><span class="td lnk" style="left:5px">V21000074</span><span class="td" style="left:142px">07-07-2021</span><span class="td" style="left:416px">LogicTrade</span><span class="td lnk" style="left:554px">Leusen, P</span><span class="td" style="left:718px">Belgischeweg 5, 123456, Leuven,Belgi&euml;</span><span class="td" style="left:992px"></span><span class="td" style="left:1102px">Definitief</span><span class="td r" style="right:230px">999,99</span><span class="td r" style="right:120.5px">0,00</span><span class="ic" style="left:1501px;top:10px"><svg class="ib" width="16" height="16" viewBox="0 0 16 16"><rect x="0" y="0.5" width="16" height="3.4" fill="#7ab629"/><path d="M1 5h14v9.6a0.8 0.8 0 0 1-0.8 0.8H1.8A0.8 0.8 0 0 1 1 14.6z" fill="#7ab629"/><rect x="6" y="7" width="4" height="1.2" rx="0.6" fill="#fff"/></svg></span><span class="ic" style="left:1530px;top:10px"><svg class="it" width="16" height="13" viewBox="0 0 16 13"><rect x="0.3" y="0.3" width="8.4" height="7.5" fill="#7ab629"/><path d="M10.2 1.8h2.6c1.3 0 2.3 1.2 2.4 3.2V9H10.2z" fill="#7ab629"/><path d="M11 2.9h1.7c.6 0 1 .8 1.1 1.9h-2.8z" fill="#fff"/><rect x="0" y="8.8" width="16" height="1.1" fill="#7ab629"/><circle cx="4.4" cy="10.5" r="1.5" fill="#7ab629"/><circle cx="12" cy="10.5" r="1.5" fill="#7ab629"/><circle cx="4.4" cy="10.5" r=".5" fill="#fff"/><circle cx="12" cy="10.5" r=".5" fill="#fff"/></svg></span><span class="ic" style="left:1562px;top:10px"><svg class="ie" width="12" height="15" viewBox="0 0 12 15"><path d="M10.9 1.7C6.2 -0.1 3.1 3 3.1 7.2C3.1 11.4 6.2 14.5 10.9 12.7" fill="none" stroke="#f5a01e" stroke-width="2.2"/><path d="M0.6 5.7H9.9M0.6 8.7H8.9" stroke="#f5a01e" stroke-width="1.5"/></svg></span></div>
<div class="tr" style="top:440px"><span class="td lnk" style="left:5px">V21000073</span><span class="td" style="left:142px">07-07-2021</span><span class="td" style="left:416px">LogicTrade</span><span class="td lnk" style="left:554px">Lagerman, D.</span><span class="td" style="left:718px">Berlijn 300, 782299 II, Berlijn,Duitsland</span><span class="td" style="left:992px"></span><span class="td" style="left:1102px">Definitief</span><span class="td r" style="right:230px">999,99</span><span class="td r" style="right:120.5px">0,00</span><span class="ic" style="left:1501px;top:10px"><svg class="ib" width="16" height="16" viewBox="0 0 16 16"><rect x="0" y="0.5" width="16" height="3.4" fill="#7ab629"/><path d="M1 5h14v9.6a0.8 0.8 0 0 1-0.8 0.8H1.8A0.8 0.8 0 0 1 1 14.6z" fill="#7ab629"/><rect x="6" y="7" width="4" height="1.2" rx="0.6" fill="#fff"/></svg></span><span class="ic" style="left:1530px;top:10px"><svg class="it" width="16" height="13" viewBox="0 0 16 13"><rect x="0.3" y="0.3" width="8.4" height="7.5" fill="#7ab629"/><path d="M10.2 1.8h2.6c1.3 0 2.3 1.2 2.4 3.2V9H10.2z" fill="#7ab629"/><path d="M11 2.9h1.7c.6 0 1 .8 1.1 1.9h-2.8z" fill="#fff"/><rect x="0" y="8.8" width="16" height="1.1" fill="#7ab629"/><circle cx="4.4" cy="10.5" r="1.5" fill="#7ab629"/><circle cx="12" cy="10.5" r="1.5" fill="#7ab629"/><circle cx="4.4" cy="10.5" r=".5" fill="#fff"/><circle cx="12" cy="10.5" r=".5" fill="#fff"/></svg></span><span class="ic" style="left:1562px;top:10px"><svg class="ie" width="12" height="15" viewBox="0 0 12 15"><path d="M10.9 1.7C6.2 -0.1 3.1 3 3.1 7.2C3.1 11.4 6.2 14.5 10.9 12.7" fill="none" stroke="#f5a01e" stroke-width="2.2"/><path d="M0.6 5.7H9.9M0.6 8.7H8.9" stroke="#f5a01e" stroke-width="1.5"/></svg></span></div>
<div class="tr" style="top:480px"><span class="td lnk" style="left:5px">V21000072</span><span class="td" style="left:142px">07-07-2021</span><span class="td" style="left:416px">LogicTrade</span><span class="td lnk" style="left:554px">Frederiks, Pepijn</span><span class="td" style="left:718px">teat 10, 7944 AB, tst</span><span class="td" style="left:992px"></span><span class="td" style="left:1102px">Definitief</span><span class="td r" style="right:230px">1999,98</span><span class="td r" style="right:120.5px">0,00</span><span class="ic" style="left:1501px;top:10px"><svg class="ib" width="16" height="16" viewBox="0 0 16 16"><rect x="0" y="0.5" width="16" height="3.4" fill="#7ab629"/><path d="M1 5h14v9.6a0.8 0.8 0 0 1-0.8 0.8H1.8A0.8 0.8 0 0 1 1 14.6z" fill="#7ab629"/><rect x="6" y="7" width="4" height="1.2" rx="0.6" fill="#fff"/></svg></span><span class="ic" style="left:1530px;top:10px"><svg class="it" width="16" height="13" viewBox="0 0 16 13"><rect x="0.3" y="0.3" width="8.4" height="7.5" fill="#7ab629"/><path d="M10.2 1.8h2.6c1.3 0 2.3 1.2 2.4 3.2V9H10.2z" fill="#7ab629"/><path d="M11 2.9h1.7c.6 0 1 .8 1.1 1.9h-2.8z" fill="#fff"/><rect x="0" y="8.8" width="16" height="1.1" fill="#7ab629"/><circle cx="4.4" cy="10.5" r="1.5" fill="#7ab629"/><circle cx="12" cy="10.5" r="1.5" fill="#7ab629"/><circle cx="4.4" cy="10.5" r=".5" fill="#fff"/><circle cx="12" cy="10.5" r=".5" fill="#fff"/></svg></span><span class="ic" style="left:1562px;top:10px"><svg class="ie" width="12" height="15" viewBox="0 0 12 15"><path d="M10.9 1.7C6.2 -0.1 3.1 3 3.1 7.2C3.1 11.4 6.2 14.5 10.9 12.7" fill="none" stroke="#f5a01e" stroke-width="2.2"/><path d="M0.6 5.7H9.9M0.6 8.7H8.9" stroke="#f5a01e" stroke-width="1.5"/></svg></span></div>
<div class="tr" style="top:520px"><span class="td lnk" style="left:5px">V21000063</span><span class="td" style="left:142px">22-06-2021</span><span class="td" style="left:416px">LogicTrade</span><span class="td lnk" style="left:554px">Test Retail</span><span class="td" style="left:718px">Weth Buitenhuisstraat 2b, 7951SM, Staphorst</span><span class="td" style="left:992px"></span><span class="td" style="left:1102px">Definitief</span><span class="td r" style="right:230px">1276,00</span><span class="td r" style="right:120.5px">0,00</span><span class="ic" style="left:1501px;top:10px"><svg class="ib" width="16" height="16" viewBox="0 0 16 16"><rect x="0" y="0.5" width="16" height="3.4" fill="#f23c2d"/><path d="M1 5h14v9.6a0.8 0.8 0 0 1-0.8 0.8H1.8A0.8 0.8 0 0 1 1 14.6z" fill="#f23c2d"/><rect x="6" y="7" width="4" height="1.2" rx="0.6" fill="#fff"/></svg></span><span class="ic" style="left:1530px;top:10px"><svg class="it" width="16" height="13" viewBox="0 0 16 13"><rect x="0.3" y="0.3" width="8.4" height="7.5" fill="#f23c2d"/><path d="M10.2 1.8h2.6c1.3 0 2.3 1.2 2.4 3.2V9H10.2z" fill="#f23c2d"/><path d="M11 2.9h1.7c.6 0 1 .8 1.1 1.9h-2.8z" fill="#fff"/><rect x="0" y="8.8" width="16" height="1.1" fill="#f23c2d"/><circle cx="4.4" cy="10.5" r="1.5" fill="#f23c2d"/><circle cx="12" cy="10.5" r="1.5" fill="#f23c2d"/><circle cx="4.4" cy="10.5" r=".5" fill="#fff"/><circle cx="12" cy="10.5" r=".5" fill="#fff"/></svg></span><span class="ic" style="left:1562px;top:10px"><svg class="ie" width="12" height="15" viewBox="0 0 12 15"><path d="M10.9 1.7C6.2 -0.1 3.1 3 3.1 7.2C3.1 11.4 6.2 14.5 10.9 12.7" fill="none" stroke="#f23c2d" stroke-width="2.2"/><path d="M0.6 5.7H9.9M0.6 8.7H8.9" stroke="#f23c2d" stroke-width="1.5"/></svg></span></div>
<div class="tr" style="top:560px"><span class="td lnk" style="left:5px">V21000062</span><span class="td" style="left:142px">12-04-2021</span><span class="td" style="left:416px">LogicTrade</span><span class="td lnk" style="left:554px">klomp, patrick</span><span class="td" style="left:718px">Heemskerkstraat 31, 7941 HW, meppel</span><span class="td" style="left:992px"></span><span class="td" style="left:1102px">Definitief</span><span class="td r" style="right:230px">1139,40</span><span class="td r" style="right:120.5px">0,00</span><span class="ic" style="left:1501px;top:10px"><svg class="ib" width="16" height="16" viewBox="0 0 16 16"><rect x="0" y="0.5" width="16" height="3.4" fill="#7ab629"/><path d="M1 5h14v9.6a0.8 0.8 0 0 1-0.8 0.8H1.8A0.8 0.8 0 0 1 1 14.6z" fill="#7ab629"/><rect x="6" y="7" width="4" height="1.2" rx="0.6" fill="#fff"/></svg></span><span class="ic" style="left:1530px;top:10px"><svg class="it" width="16" height="13" viewBox="0 0 16 13"><rect x="0.3" y="0.3" width="8.4" height="7.5" fill="#7ab629"/><path d="M10.2 1.8h2.6c1.3 0 2.3 1.2 2.4 3.2V9H10.2z" fill="#7ab629"/><path d="M11 2.9h1.7c.6 0 1 .8 1.1 1.9h-2.8z" fill="#fff"/><rect x="0" y="8.8" width="16" height="1.1" fill="#7ab629"/><circle cx="4.4" cy="10.5" r="1.5" fill="#7ab629"/><circle cx="12" cy="10.5" r="1.5" fill="#7ab629"/><circle cx="4.4" cy="10.5" r=".5" fill="#fff"/><circle cx="12" cy="10.5" r=".5" fill="#fff"/></svg></span><span class="ic" style="left:1562px;top:10px"><svg class="ie" width="12" height="15" viewBox="0 0 12 15"><path d="M10.9 1.7C6.2 -0.1 3.1 3 3.1 7.2C3.1 11.4 6.2 14.5 10.9 12.7" fill="none" stroke="#f5a01e" stroke-width="2.2"/><path d="M0.6 5.7H9.9M0.6 8.7H8.9" stroke="#f5a01e" stroke-width="1.5"/></svg></span></div>
<div class="tr" style="top:600px"><span class="td lnk" style="left:5px">V21000061</span><span class="td" style="left:142px">12-04-2021</span><span class="td" style="left:416px">LogicTrade</span><span class="td lnk" style="left:554px">Meester, Liz</span><span class="td" style="left:718px">hoistraat 11, 31920393983932, Amsterdam</span><span class="td" style="left:992px"></span><span class="td" style="left:1102px">Definitief</span><span class="td r" style="right:230px">76,00</span><span class="td r" style="right:120.5px">0,00</span><span class="ic" style="left:1501px;top:10px"><svg class="ib" width="16" height="16" viewBox="0 0 16 16"><rect x="0" y="0.5" width="16" height="3.4" fill="#7ab629"/><path d="M1 5h14v9.6a0.8 0.8 0 0 1-0.8 0.8H1.8A0.8 0.8 0 0 1 1 14.6z" fill="#7ab629"/><rect x="6" y="7" width="4" height="1.2" rx="0.6" fill="#fff"/></svg></span><span class="ic" style="left:1530px;top:10px"><svg class="it" width="16" height="13" viewBox="0 0 16 13"><rect x="0.3" y="0.3" width="8.4" height="7.5" fill="#f23c2d"/><path d="M10.2 1.8h2.6c1.3 0 2.3 1.2 2.4 3.2V9H10.2z" fill="#f23c2d"/><path d="M11 2.9h1.7c.6 0 1 .8 1.1 1.9h-2.8z" fill="#fff"/><rect x="0" y="8.8" width="16" height="1.1" fill="#f23c2d"/><circle cx="4.4" cy="10.5" r="1.5" fill="#f23c2d"/><circle cx="12" cy="10.5" r="1.5" fill="#f23c2d"/><circle cx="4.4" cy="10.5" r=".5" fill="#fff"/><circle cx="12" cy="10.5" r=".5" fill="#fff"/></svg></span><span class="ic" style="left:1562px;top:10px"><svg class="ie" width="12" height="15" viewBox="0 0 12 15"><path d="M10.9 1.7C6.2 -0.1 3.1 3 3.1 7.2C3.1 11.4 6.2 14.5 10.9 12.7" fill="none" stroke="#f5a01e" stroke-width="2.2"/><path d="M0.6 5.7H9.9M0.6 8.7H8.9" stroke="#f5a01e" stroke-width="1.5"/></svg></span></div>
<div class="tr" style="top:640px"><span class="td lnk" style="left:5px">V21000060</span><span class="td" style="left:142px">12-04-2021</span><span class="td" style="left:416px">LogicTrade</span><span class="td lnk" style="left:554px">Meester, Liz</span><span class="td" style="left:718px">hoistraat 11, 1012, Amsterdam</span><span class="td" style="left:992px"></span><span class="td" style="left:1102px">Definitief</span><span class="td r" style="right:230px">109,00</span><span class="td r" style="right:120.5px">0,00</span><span class="ic" style="left:1501px;top:10px"><svg class="ib" width="16" height="16" viewBox="0 0 16 16"><rect x="0" y="0.5" width="16" height="3.4" fill="#f23c2d"/><path d="M1 5h14v9.6a0.8 0.8 0 0 1-0.8 0.8H1.8A0.8 0.8 0 0 1 1 14.6z" fill="#f23c2d"/><rect x="6" y="7" width="4" height="1.2" rx="0.6" fill="#fff"/></svg></span><span class="ic" style="left:1530px;top:10px"><svg class="it" width="16" height="13" viewBox="0 0 16 13"><rect x="0.3" y="0.3" width="8.4" height="7.5" fill="#f23c2d"/><path d="M10.2 1.8h2.6c1.3 0 2.3 1.2 2.4 3.2V9H10.2z" fill="#f23c2d"/><path d="M11 2.9h1.7c.6 0 1 .8 1.1 1.9h-2.8z" fill="#fff"/><rect x="0" y="8.8" width="16" height="1.1" fill="#f23c2d"/><circle cx="4.4" cy="10.5" r="1.5" fill="#f23c2d"/><circle cx="12" cy="10.5" r="1.5" fill="#f23c2d"/><circle cx="4.4" cy="10.5" r=".5" fill="#fff"/><circle cx="12" cy="10.5" r=".5" fill="#fff"/></svg></span><span class="ic" style="left:1562px;top:10px"><svg class="ie" width="12" height="15" viewBox="0 0 12 15"><path d="M10.9 1.7C6.2 -0.1 3.1 3 3.1 7.2C3.1 11.4 6.2 14.5 10.9 12.7" fill="none" stroke="#f5a01e" stroke-width="2.2"/><path d="M0.6 5.7H9.9M0.6 8.7H8.9" stroke="#f5a01e" stroke-width="1.5"/></svg></span></div>
<div class="tr" style="top:680px"><span class="td lnk" style="left:5px">V21000059</span><span class="td" style="left:142px">12-04-2021</span><span class="td" style="left:416px">LogicTrade</span><span class="td lnk" style="left:554px">Homan</span><span class="td" style="left:718px">Heemskerkstraat 31, 7942HW, Meppel</span><span class="td" style="left:992px"></span><span class="td" style="left:1102px">Definitief</span><span class="td r" style="right:230px">0,00</span><span class="td r" style="right:120.5px">0,00</span><span class="ic" style="left:1501px;top:10px"><svg class="ib" width="16" height="16" viewBox="0 0 16 16"><rect x="0" y="0.5" width="16" height="3.4" fill="#7ab629"/><path d="M1 5h14v9.6a0.8 0.8 0 0 1-0.8 0.8H1.8A0.8 0.8 0 0 1 1 14.6z" fill="#7ab629"/><rect x="6" y="7" width="4" height="1.2" rx="0.6" fill="#fff"/></svg></span><span class="ic" style="left:1530px;top:10px"><svg class="it" width="16" height="13" viewBox="0 0 16 13"><rect x="0.3" y="0.3" width="8.4" height="7.5" fill="#f23c2d"/><path d="M10.2 1.8h2.6c1.3 0 2.3 1.2 2.4 3.2V9H10.2z" fill="#f23c2d"/><path d="M11 2.9h1.7c.6 0 1 .8 1.1 1.9h-2.8z" fill="#fff"/><rect x="0" y="8.8" width="16" height="1.1" fill="#f23c2d"/><circle cx="4.4" cy="10.5" r="1.5" fill="#f23c2d"/><circle cx="12" cy="10.5" r="1.5" fill="#f23c2d"/><circle cx="4.4" cy="10.5" r=".5" fill="#fff"/><circle cx="12" cy="10.5" r=".5" fill="#fff"/></svg></span><span class="ic" style="left:1562px;top:10px"><svg class="ie" width="12" height="15" viewBox="0 0 12 15"><path d="M10.9 1.7C6.2 -0.1 3.1 3 3.1 7.2C3.1 11.4 6.2 14.5 10.9 12.7" fill="none" stroke="#f23c2d" stroke-width="2.2"/><path d="M0.6 5.7H9.9M0.6 8.7H8.9" stroke="#f23c2d" stroke-width="1.5"/></svg></span></div>
  </div>
  <div id="sbar"></div>
</div>

<div id="dd">
  <div id="ddsearch"><span>Zoeken...</span></div>
  <div class="ddi" style="top:46px"><span>Afhalen</span></div>
  <div class="ddi hov" style="top:79px"><span>Bezorgen</span></div>
  <div class="ddi" style="top:112px"><span>Bezorgen+montage</span></div>
  <div class="ddi" style="top:145px"><span>Opsturen</span></div>
  <div class="ddi" style="top:178px"><span>Montage</span></div>
  <div class="ddi" style="top:211px"><span>Fiets</span></div>
</div>
<!-- hand cursor -->
<svg class="abs" style="left:1058px;top:188px" width="30" height="34" viewBox="0 0 30 34"><path d="M10.4 18.6V7C10.4 5.8 11.2 5.1 12.1 5.1C13 5.1 13.8 5.8 13.8 7V11.2C13.8 10.6 14.3 10.3 14.9 10.3C15.6 10.3 16.2 10.7 16.4 11.5C16.6 11.1 17.2 10.9 17.8 10.9C18.6 10.9 19.3 11.4 19.4 12.2C19.6 11.9 20.1 11.8 20.6 11.8C21.9 11.8 22.8 12.6 22.8 13.8V22C22.8 26 19.6 28.6 15 28.6C11.8 28.6 10 27 8.2 24.2L5.6 20.2C5 19.2 5.4 18.1 6.4 17.8C7.6 17.4 8.6 17.9 9.4 18.8L10.4 20Z" fill="#fff" stroke="#111" stroke-width="1.3" stroke-linejoin="round"/><path d="M13.6 11.5V15.6M16.5 12V15.6M19.5 12.6V15.6" stroke="#111" stroke-width="1.1"/></svg>

<div id="pag">
<svg class="g" style="left:933px;top:898px" width="16" height="16" viewBox="0 0 16 16"><path d="M7.5 1L1.5 8L7.5 15M14.5 1L8.5 8L14.5 15" fill="none" stroke="#8a929c" stroke-width="2"/></svg>
<svg class="g" style="left:970px;top:898px" width="10" height="16" viewBox="0 0 10 16"><path d="M9 1L2 8L9 15" fill="none" stroke="#8a929c" stroke-width="2"/></svg>
<div id="pgsel"><span>1</span><div class="abs" style="left:55px;top:10px;width:0;height:0;border-left:4px solid transparent;border-right:4px solid transparent;border-top:5px solid #333"></div></div>
<svg class="g" style="left:1074px;top:898px" width="10" height="16" viewBox="0 0 10 16"><path d="M1 1L8 8L1 15" fill="none" stroke="#0b3170" stroke-width="2"/></svg>
<svg class="g" style="left:1105px;top:898px" width="16" height="16" viewBox="0 0 16 16"><path d="M1 1L7 8L1 15M8 1L14.5 8L8 15" fill="none" stroke="#0b3170" stroke-width="2"/></svg>
<div id="pgdiv"></div>
<div id="pgtxt">1 - 50 van 70</div>
</div>
</div></body></html>
